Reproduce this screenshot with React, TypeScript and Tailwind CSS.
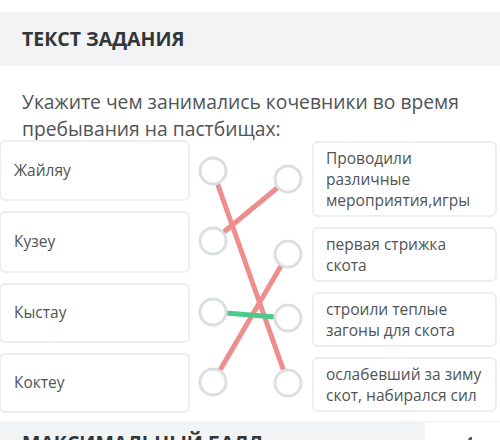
import React from "react";

const left = ["Жайляу", "Кузеу", "Кыстау", "Коктеу"];
const leftH = ["h-[61px]", "h-[62px]", "h-[60px]", "h-[60px]"];
const right = [
  ["Проводили", "различные", "мероприятия,игры"],
  ["первая стрижка", "скота"],
  ["строили теплые", "загоны для скота"],
  ["ослабевший за зиму", "скот, набирался сил"],
];
const rightH = ["h-[76px]", "h-[55px]", "h-[55px]", "h-[55px]"];

// coordinates relative to svg origin (x=190, y=140)
const L = [
  [23, 31],
  [23, 101],
  [23, 172],
  [23, 242],
];
const R = [
  [98, 39],
  [98, 114],
  [98, 178],
  [98, 243],
];
const links: [number, number, string][] = [
  [0, 3, "#ee8e8c"],
  [1, 0, "#ee8e8c"],
  [3, 1, "#ee8e8c"],
  [2, 2, "#4fc98a"],
];

export default function App() {
  return (
    <div
      className="w-[500px] h-[440px] overflow-hidden bg-white flex flex-col"
      style={{ fontFamily: '"Open Sans", "Noto Sans", sans-serif' }}
    >
      <div className="h-[12px] shrink-0 bg-white" />
      <div className="h-[54px] shrink-0 bg-[#f1f3f4] flex items-center pl-[22px]">
        <span className="text-[19.5px] font-bold text-[#333638]">
          ТЕКСТ ЗАДАНИЯ
        </span>
      </div>
      <div className="shrink-0 pl-[22px] pt-[22px] pr-[20px] text-[19.3px] leading-[27px] text-[#505456] h-[74px]">
        Укажите чем занимались кочевники во время пребывания на пастбищах:
      </div>
      <div className="flex shrink-0 h-[277px]">
        <div className="w-[191px] flex flex-col gap-[10px] ml-[-1px]">
          {left.map((t, i) => (
            <div
              key={t}
              className={`${leftH[i]} shrink-0 border-2 border-[#eceeef] rounded-[6px] flex items-center pl-[13px] text-[15.5px] text-[#505456] bg-white`}
            >
              {t}
            </div>
          ))}
        </div>
        <div className="w-[122px] shrink-0">
          <svg width="122" height="277" viewBox="0 0 122 277">
            {links.map(([a, b, c], k) => (
              <line
                key={k}
                x1={L[a][0]}
                y1={L[a][1]}
                x2={R[b][0]}
                y2={R[b][1]}
                stroke={c}
                strokeWidth={5}
              />
            ))}
            {L.map(([x, y], k) => (
              <circle key={"l" + k} cx={x} cy={y} r={13} fill="white" stroke="#dcdfe0" strokeWidth={3} />
            ))}
            {R.map(([x, y], k) => (
              <circle key={"r" + k} cx={x} cy={y} r={13} fill="white" stroke="#dcdfe0" strokeWidth={3} />
            ))}
          </svg>
        </div>
        <div className="w-[185px] flex flex-col gap-[10px] pt-[1px]">
          {right.map((lines, i) => (
            <div
              key={i}
              className={`${rightH[i]} shrink-0 border-2 border-[#eceeef] rounded-[6px] flex flex-col justify-center pl-[12px] text-[15.5px] leading-[21px] text-[#505456] bg-white`}
            >
              {lines.map((l) => (
                <span key={l}>{l}</span>
              ))}
            </div>
          ))}
        </div>
      </div>
      <div className="flex shrink-0 h-[23px] mt-[4px] overflow-hidden">
        <div className="w-[425px] bg-[#f1f3f4] pl-[22px] pt-[8px] text-[19.5px] leading-[27px] font-bold text-[#333638] whitespace-nowrap overflow-hidden">
          МАКСИМАЛЬНЫЙ БАЛЛ
        </div>
        <div className="flex-1 bg-white border-t border-[#eef0f1] pl-[38px] pt-[8px] text-[19.5px] leading-[27px] text-[#333638]">
          4
        </div>
      </div>
    </div>
  );
}
